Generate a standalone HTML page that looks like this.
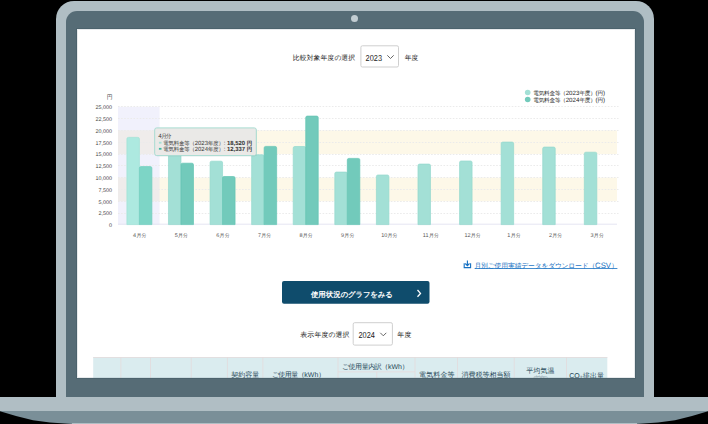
<!DOCTYPE html>
<html><head><meta charset="utf-8">
<style>
*{margin:0;padding:0;box-sizing:border-box}
html,body{width:708px;height:424px;overflow:hidden;background:#000}
body{position:relative;font-family:"Liberation Sans",sans-serif}
svg{position:absolute;display:block}
svg text{font-family:"Liberation Sans",sans-serif;text-rendering:geometricPrecision}
#outer{position:absolute;left:56px;top:1px;width:598px;height:410px;background:#b0bec4;border-radius:18px 18px 0 0}
#inner{position:absolute;left:66px;top:11px;width:578px;height:386px;background:#566c76;border-radius:11px 11px 0 0}
#cam{position:absolute;left:350.8px;top:14.6px;width:7.4px;height:7.4px;border-radius:50%;background:#c2cdd2}
#base{position:absolute;left:0;top:397px;width:708px;height:14px;background:#b0bec4}
#screen{position:absolute;left:77px;top:29px;width:558px;height:349px;background:#fff;overflow:hidden;box-shadow:0 0 0 0.8px rgba(60,85,95,.45)}
#edge{position:absolute;left:77px;top:29px;width:558px;height:349px;box-shadow:inset 0 0 0 1px rgba(120,140,150,.18);pointer-events:none}
</style></head><body>
<div id="outer"></div>
<div id="inner"></div>
<div id="cam"></div>
<div id="base"></div>
<svg style="left:0;top:0" width="708" height="424"><polygon points="0,411 708,411 708,411.3 692,415.9 675,420.2 658,422.5 636,424 72,424 50,422.5 33,420.2 16,415.9 0,411.3" fill="#7a8f98"/><rect x="72" y="423" width="565" height="1" fill="#b0bec4"/></svg>
<div id="screen"><svg style="left:0;top:0" width="558" height="349"><text y="30.81" fill="#222" font-weight="normal" ><tspan class="j" x="215.80" font-size="8.69" stroke="#222" stroke-width="0.20">比</tspan><tspan class="j" x="222.74" font-size="8.69" stroke="#222" stroke-width="0.20">較</tspan><tspan class="j" x="229.67" font-size="8.69" stroke="#222" stroke-width="0.20">対</tspan><tspan class="j" x="236.61" font-size="8.69" stroke="#222" stroke-width="0.20">象</tspan><tspan class="j" x="243.54" font-size="8.69" stroke="#222" stroke-width="0.20">年</tspan><tspan class="j" x="250.48" font-size="8.69" stroke="#222" stroke-width="0.20">度</tspan><tspan class="j" x="257.41" font-size="8.69" stroke="#222" stroke-width="0.20">の</tspan><tspan class="j" x="264.35" font-size="8.69" stroke="#222" stroke-width="0.20">選</tspan><tspan class="j" x="271.29" font-size="8.69" stroke="#222" stroke-width="0.20">択</tspan></text><rect x="283.90" y="16.80" width="37.60" height="21.20" fill="#fff" stroke="#cfcfcf" stroke-width="1" rx="1.5"/><text x="288.58" y="32.00" fill="#222" font-weight="normal" font-size="8.60" textLength="16.43" lengthAdjust="spacingAndGlyphs" >2023</text><polyline points="310.3,26.299999999999997 313.5,29.5 316.7,26.299999999999997" fill="none" stroke="#555" stroke-width="0.9"/><text y="31.11" fill="#222" font-weight="normal" ><tspan class="j" x="327.74" font-size="8.69" stroke="#222" stroke-width="0.20">年</tspan><tspan class="j" x="334.55" font-size="8.69" stroke="#222" stroke-width="0.20">度</tspan></text><rect x="41.0" y="101.40" width="499" height="23.60" fill="#fdf8e8"/><rect x="41.0" y="148.60" width="499" height="23.60" fill="#fdf8e8"/><rect x="41.0" y="77.80" width="41.58" height="117.90" fill="#c8c8f4" fill-opacity="0.25"/><line x1="41.0" x2="541.5" y1="184.50" y2="184.50" stroke="#ebebeb" stroke-width="1" stroke-dasharray="1.6 1.5"/><line x1="41.0" x2="541.5" y1="172.50" y2="172.50" stroke="#ebebeb" stroke-width="1" stroke-dasharray="1.6 1.5"/><line x1="41.0" x2="541.5" y1="160.50" y2="160.50" stroke="#ebebeb" stroke-width="1" stroke-dasharray="1.6 1.5"/><line x1="41.0" x2="541.5" y1="148.50" y2="148.50" stroke="#ebebeb" stroke-width="1" stroke-dasharray="1.6 1.5"/><line x1="41.0" x2="541.5" y1="136.50" y2="136.50" stroke="#ebebeb" stroke-width="1" stroke-dasharray="1.6 1.5"/><line x1="41.0" x2="541.5" y1="125.50" y2="125.50" stroke="#ebebeb" stroke-width="1" stroke-dasharray="1.6 1.5"/><line x1="41.0" x2="541.5" y1="113.50" y2="113.50" stroke="#ebebeb" stroke-width="1" stroke-dasharray="1.6 1.5"/><line x1="41.0" x2="541.5" y1="101.50" y2="101.50" stroke="#ebebeb" stroke-width="1" stroke-dasharray="1.6 1.5"/><line x1="41.0" x2="541.5" y1="89.50" y2="89.50" stroke="#ebebeb" stroke-width="1" stroke-dasharray="1.6 1.5"/><line x1="41.0" x2="541.5" y1="77.50" y2="77.50" stroke="#ebebeb" stroke-width="1" stroke-dasharray="1.6 1.5"/><line x1="41.0" x2="540.0" y1="195.2" y2="195.2" stroke="#e2e2f0" stroke-width="0.9"/><path d="M49.90,195.6 V109.89 Q49.90,108.39 51.40,108.39 H60.90 Q62.40,108.39 62.40,109.89 V195.6 Z" fill="#ade9e0" stroke="#9de2d6" stroke-width="0.7"/><path d="M62.40,195.6 V139.07 Q62.40,137.57 63.90,137.57 H73.40 Q74.90,137.57 74.90,139.07 V195.6 Z" fill="#7dd5c6" stroke="#70cfbf" stroke-width="0.7"/><path d="M91.48,195.6 V120.84 Q91.48,119.34 92.98,119.34 H102.48 Q103.98,119.34 103.98,120.84 V195.6 Z" fill="#a3e0d6" stroke="#93d9cd" stroke-width="0.7"/><path d="M103.98,195.6 V135.69 Q103.98,134.19 105.48,134.19 H114.98 Q116.48,134.19 116.48,135.69 V195.6 Z" fill="#72cabb" stroke="#63c4b3" stroke-width="0.7"/><path d="M133.07,195.6 V133.69 Q133.07,132.19 134.57,132.19 H144.07 Q145.57,132.19 145.57,133.69 V195.6 Z" fill="#a3e0d6" stroke="#93d9cd" stroke-width="0.7"/><path d="M145.57,195.6 V148.99 Q145.57,147.49 147.07,147.49 H156.57 Q158.07,147.49 158.07,148.99 V195.6 Z" fill="#72cabb" stroke="#63c4b3" stroke-width="0.7"/><path d="M174.65,195.6 V127.29 Q174.65,125.79 176.15,125.79 H185.65 Q187.15,125.79 187.15,127.29 V195.6 Z" fill="#a3e0d6" stroke="#93d9cd" stroke-width="0.7"/><path d="M187.15,195.6 V118.89 Q187.15,117.39 188.65,117.39 H198.15 Q199.65,117.39 199.65,118.89 V195.6 Z" fill="#72cabb" stroke="#63c4b3" stroke-width="0.7"/><path d="M216.23,195.6 V118.99 Q216.23,117.49 217.73,117.49 H227.23 Q228.73,117.49 228.73,118.99 V195.6 Z" fill="#a3e0d6" stroke="#93d9cd" stroke-width="0.7"/><path d="M228.73,195.6 V88.58 Q228.73,87.08 230.23,87.08 H239.73 Q241.23,87.08 241.23,88.58 V195.6 Z" fill="#72cabb" stroke="#63c4b3" stroke-width="0.7"/><path d="M257.82,195.6 V144.59 Q257.82,143.09 259.32,143.09 H268.82 Q270.32,143.09 270.32,144.59 V195.6 Z" fill="#a3e0d6" stroke="#93d9cd" stroke-width="0.7"/><path d="M270.32,195.6 V130.89 Q270.32,129.39 271.82,129.39 H281.32 Q282.82,129.39 282.82,130.89 V195.6 Z" fill="#72cabb" stroke="#63c4b3" stroke-width="0.7"/><path d="M299.40,195.6 V147.49 Q299.40,145.99 300.90,145.99 H310.40 Q311.90,145.99 311.90,147.49 V195.6 Z" fill="#a3e0d6" stroke="#93d9cd" stroke-width="0.7"/><path d="M340.98,195.6 V136.59 Q340.98,135.09 342.48,135.09 H351.98 Q353.48,135.09 353.48,136.59 V195.6 Z" fill="#a3e0d6" stroke="#93d9cd" stroke-width="0.7"/><path d="M382.57,195.6 V133.49 Q382.57,131.99 384.07,131.99 H393.57 Q395.07,131.99 395.07,133.49 V195.6 Z" fill="#a3e0d6" stroke="#93d9cd" stroke-width="0.7"/><path d="M424.15,195.6 V114.59 Q424.15,113.09 425.65,113.09 H435.15 Q436.65,113.09 436.65,114.59 V195.6 Z" fill="#a3e0d6" stroke="#93d9cd" stroke-width="0.7"/><path d="M465.73,195.6 V119.59 Q465.73,118.09 467.23,118.09 H476.73 Q478.23,118.09 478.23,119.59 V195.6 Z" fill="#a3e0d6" stroke="#93d9cd" stroke-width="0.7"/><path d="M507.32,195.6 V124.69 Q507.32,123.19 508.82,123.19 H518.32 Q519.82,123.19 519.82,124.69 V195.6 Z" fill="#a3e0d6" stroke="#93d9cd" stroke-width="0.7"/><text x="35.099999999999994" y="198.24" font-size="5.4" fill="#444" text-anchor="end">0</text><text x="35.099999999999994" y="186.44" font-size="5.4" fill="#444" text-anchor="end">2,500</text><text x="35.099999999999994" y="174.64" font-size="5.4" fill="#444" text-anchor="end">5,000</text><text x="35.099999999999994" y="162.84" font-size="5.4" fill="#444" text-anchor="end">7,500</text><text x="35.099999999999994" y="151.04" font-size="5.4" fill="#444" text-anchor="end">10,000</text><text x="35.099999999999994" y="139.24" font-size="5.4" fill="#444" text-anchor="end">12,500</text><text x="35.099999999999994" y="127.44" font-size="5.4" fill="#444" text-anchor="end">15,000</text><text x="35.099999999999994" y="115.64" font-size="5.4" fill="#444" text-anchor="end">17,500</text><text x="35.099999999999994" y="103.84" font-size="5.4" fill="#444" text-anchor="end">20,000</text><text x="35.099999999999994" y="92.04" font-size="5.4" fill="#444" text-anchor="end">22,500</text><text x="35.099999999999994" y="80.24" font-size="5.4" fill="#444" text-anchor="end">25,000</text><text y="70.05" fill="#444" font-weight="normal" ><tspan class="j" x="29.69" font-size="7.37" stroke="#444" stroke-width="0.17">円</tspan></text><text y="208.10" fill="#555" font-weight="normal" ><tspan x="56.12" font-size="5.50">4</tspan><tspan class="j" x="59.38" font-size="6.35" stroke="#555" stroke-width="0.14">月</tspan><tspan class="j" x="64.52" font-size="6.35" stroke="#555" stroke-width="0.14">分</tspan></text><text y="208.10" fill="#555" font-weight="normal" ><tspan x="97.71" font-size="5.50">5</tspan><tspan class="j" x="100.96" font-size="6.35" stroke="#555" stroke-width="0.14">月</tspan><tspan class="j" x="106.10" font-size="6.35" stroke="#555" stroke-width="0.14">分</tspan></text><text y="208.10" fill="#555" font-weight="normal" ><tspan x="139.29" font-size="5.50">6</tspan><tspan class="j" x="142.54" font-size="6.35" stroke="#555" stroke-width="0.14">月</tspan><tspan class="j" x="147.69" font-size="6.35" stroke="#555" stroke-width="0.14">分</tspan></text><text y="208.10" fill="#555" font-weight="normal" ><tspan x="180.88" font-size="5.50">7</tspan><tspan class="j" x="184.13" font-size="6.35" stroke="#555" stroke-width="0.14">月</tspan><tspan class="j" x="189.27" font-size="6.35" stroke="#555" stroke-width="0.14">分</tspan></text><text y="208.10" fill="#555" font-weight="normal" ><tspan x="222.46" font-size="5.50">8</tspan><tspan class="j" x="225.71" font-size="6.35" stroke="#555" stroke-width="0.14">月</tspan><tspan class="j" x="230.85" font-size="6.35" stroke="#555" stroke-width="0.14">分</tspan></text><text y="208.10" fill="#555" font-weight="normal" ><tspan x="264.04" font-size="5.50">9</tspan><tspan class="j" x="267.29" font-size="6.35" stroke="#555" stroke-width="0.14">月</tspan><tspan class="j" x="272.44" font-size="6.35" stroke="#555" stroke-width="0.14">分</tspan></text><text y="208.10" fill="#555" font-weight="normal" ><tspan x="304.25" font-size="5.50">10</tspan><tspan class="j" x="310.48" font-size="6.35" stroke="#555" stroke-width="0.14">月</tspan><tspan class="j" x="315.47" font-size="6.35" stroke="#555" stroke-width="0.14">分</tspan></text><text y="208.10" fill="#555" font-weight="normal" ><tspan x="345.83" font-size="5.50">11</tspan><tspan class="j" x="352.07" font-size="6.35" stroke="#555" stroke-width="0.14">月</tspan><tspan class="j" x="357.06" font-size="6.35" stroke="#555" stroke-width="0.14">分</tspan></text><text y="208.10" fill="#555" font-weight="normal" ><tspan x="387.42" font-size="5.50">12</tspan><tspan class="j" x="393.65" font-size="6.35" stroke="#555" stroke-width="0.14">月</tspan><tspan class="j" x="398.64" font-size="6.35" stroke="#555" stroke-width="0.14">分</tspan></text><text y="208.10" fill="#555" font-weight="normal" ><tspan x="430.37" font-size="5.50">1</tspan><tspan class="j" x="433.63" font-size="6.35" stroke="#555" stroke-width="0.14">月</tspan><tspan class="j" x="438.77" font-size="6.35" stroke="#555" stroke-width="0.14">分</tspan></text><text y="208.10" fill="#555" font-weight="normal" ><tspan x="471.96" font-size="5.50">2</tspan><tspan class="j" x="475.21" font-size="6.35" stroke="#555" stroke-width="0.14">月</tspan><tspan class="j" x="480.35" font-size="6.35" stroke="#555" stroke-width="0.14">分</tspan></text><text y="208.10" fill="#555" font-weight="normal" ><tspan x="513.54" font-size="5.50">3</tspan><tspan class="j" x="516.79" font-size="6.35" stroke="#555" stroke-width="0.14">月</tspan><tspan class="j" x="521.94" font-size="6.35" stroke="#555" stroke-width="0.14">分</tspan></text><circle cx="450.70000000000005" cy="63.5" r="2.8" fill="#a3e0d6"/><circle cx="450.70000000000005" cy="70.5" r="2.8" fill="#72cabb"/><text y="66.16" fill="#222" font-weight="normal" ><tspan class="j" x="456.30" font-size="7.11" stroke="#222" stroke-width="0.16">電</tspan><tspan class="j" x="461.69" font-size="7.11" stroke="#222" stroke-width="0.16">気</tspan><tspan class="j" x="467.09" font-size="7.11" stroke="#222" stroke-width="0.16">料</tspan><tspan class="j" x="472.49" font-size="7.11" stroke="#222" stroke-width="0.16">金</tspan><tspan class="j" x="477.88" font-size="7.11" stroke="#222" stroke-width="0.16">等</tspan><tspan class="j" x="483.28" font-size="7.11" stroke="#222" stroke-width="0.16">（</tspan><tspan x="488.64" font-size="6.16">2023</tspan><tspan class="j" x="502.38" font-size="7.11" stroke="#222" stroke-width="0.16">年</tspan><tspan class="j" x="507.77" font-size="7.11" stroke="#222" stroke-width="0.16">度</tspan><tspan class="j" x="513.17" font-size="7.11" stroke="#222" stroke-width="0.16">）</tspan><tspan x="518.54" font-size="6.16">(</tspan><tspan class="j" x="520.62" font-size="7.11" stroke="#222" stroke-width="0.16">円</tspan><tspan x="525.98" font-size="6.16">)</tspan></text><text y="73.26" fill="#222" font-weight="normal" ><tspan class="j" x="456.30" font-size="7.11" stroke="#222" stroke-width="0.16">電</tspan><tspan class="j" x="461.69" font-size="7.11" stroke="#222" stroke-width="0.16">気</tspan><tspan class="j" x="467.09" font-size="7.11" stroke="#222" stroke-width="0.16">料</tspan><tspan class="j" x="472.49" font-size="7.11" stroke="#222" stroke-width="0.16">金</tspan><tspan class="j" x="477.88" font-size="7.11" stroke="#222" stroke-width="0.16">等</tspan><tspan class="j" x="483.28" font-size="7.11" stroke="#222" stroke-width="0.16">（</tspan><tspan x="488.64" font-size="6.16">2024</tspan><tspan class="j" x="502.38" font-size="7.11" stroke="#222" stroke-width="0.16">年</tspan><tspan class="j" x="507.77" font-size="7.11" stroke="#222" stroke-width="0.16">度</tspan><tspan class="j" x="513.17" font-size="7.11" stroke="#222" stroke-width="0.16">）</tspan><tspan x="518.54" font-size="6.16">(</tspan><tspan class="j" x="520.62" font-size="7.11" stroke="#222" stroke-width="0.16">円</tspan><tspan x="525.98" font-size="6.16">)</tspan></text><rect x="78.20" y="99.60" width="101.60" height="27.70" fill="#000" fill-opacity="0.12" rx="2.5"/><rect x="77.70" y="98.90" width="101.60" height="27.70" fill="#eae9e7" stroke="#a8dcd2" stroke-width="1" rx="2"/><text y="108.76" fill="#333" font-weight="normal" ><tspan x="81.16" font-size="6.16">4</tspan><tspan class="j" x="84.23" font-size="7.11" stroke="#333" stroke-width="0.16">月</tspan><tspan class="j" x="88.86" font-size="7.11" stroke="#333" stroke-width="0.16">分</tspan></text><rect x="81.90" y="112.80" width="2.60" height="1.80" fill="#a3e0d6" /><rect x="81.90" y="118.90" width="2.60" height="1.80" fill="#3fb8a2" /><text y="115.98" fill="#333" font-weight="normal" ><tspan class="j" x="86.32" font-size="6.86" stroke="#333" stroke-width="0.15">電</tspan><tspan class="j" x="91.57" font-size="6.86" stroke="#333" stroke-width="0.15">気</tspan><tspan class="j" x="96.81" font-size="6.86" stroke="#333" stroke-width="0.15">料</tspan><tspan class="j" x="102.05" font-size="6.86" stroke="#333" stroke-width="0.15">金</tspan><tspan class="j" x="107.29" font-size="6.86" stroke="#333" stroke-width="0.15">等</tspan><tspan class="j" x="112.53" font-size="6.86" stroke="#333" stroke-width="0.15">（</tspan><tspan x="117.72" font-size="5.94">2023</tspan><tspan class="j" x="130.99" font-size="6.86" stroke="#333" stroke-width="0.15">年</tspan><tspan class="j" x="136.23" font-size="6.86" stroke="#333" stroke-width="0.15">度</tspan><tspan class="j" x="141.47" font-size="6.86" stroke="#333" stroke-width="0.15">）</tspan><tspan x="146.66" font-size="5.94">: </tspan><tspan x="149.96" font-size="5.94" font-weight="bold">18,520 </tspan><tspan class="j" x="169.83" font-size="6.86" stroke="#333" stroke-width="0.15" font-weight="bold">円</tspan></text><text y="122.28" fill="#333" font-weight="normal" ><tspan class="j" x="86.32" font-size="6.86" stroke="#333" stroke-width="0.15">電</tspan><tspan class="j" x="91.57" font-size="6.86" stroke="#333" stroke-width="0.15">気</tspan><tspan class="j" x="96.81" font-size="6.86" stroke="#333" stroke-width="0.15">料</tspan><tspan class="j" x="102.05" font-size="6.86" stroke="#333" stroke-width="0.15">金</tspan><tspan class="j" x="107.29" font-size="6.86" stroke="#333" stroke-width="0.15">等</tspan><tspan class="j" x="112.53" font-size="6.86" stroke="#333" stroke-width="0.15">（</tspan><tspan x="117.72" font-size="5.94">2024</tspan><tspan class="j" x="130.99" font-size="6.86" stroke="#333" stroke-width="0.15">年</tspan><tspan class="j" x="136.23" font-size="6.86" stroke="#333" stroke-width="0.15">度</tspan><tspan class="j" x="141.47" font-size="6.86" stroke="#333" stroke-width="0.15">）</tspan><tspan x="146.66" font-size="5.94">: </tspan><tspan x="149.96" font-size="5.94" font-weight="bold">12,337 </tspan><tspan class="j" x="169.83" font-size="6.86" stroke="#333" stroke-width="0.15" font-weight="bold">円</tspan></text><path d="M390.4,231.60000000000002 V236.60000000000002 M388.3,234.5 L390.4,236.60000000000002 L392.5,234.5 M387.2,234.3 V238.60000000000002 H393.6 V234.3" fill="none" stroke="#1570c2" stroke-width="1.1"/><text y="238.99" fill="#1570c2" font-weight="normal" ><tspan class="j" x="397.41" font-size="8.64" stroke="#1570c2" stroke-width="0.19">月</tspan><tspan class="j" x="404.11" font-size="8.64" stroke="#1570c2" stroke-width="0.19">別</tspan><tspan class="j" x="410.82" font-size="8.64" stroke="#1570c2" stroke-width="0.19">ご</tspan><tspan class="j" x="417.53" font-size="8.64" stroke="#1570c2" stroke-width="0.19">使</tspan><tspan class="j" x="424.24" font-size="8.64" stroke="#1570c2" stroke-width="0.19">用</tspan><tspan class="j" x="430.94" font-size="8.64" stroke="#1570c2" stroke-width="0.19">実</tspan><tspan class="j" x="437.65" font-size="8.64" stroke="#1570c2" stroke-width="0.19">績</tspan><tspan class="j" x="444.36" font-size="8.64" stroke="#1570c2" stroke-width="0.19">デ</tspan><tspan class="j" x="451.06" font-size="8.64" stroke="#1570c2" stroke-width="0.19">ー</tspan><tspan class="j" x="457.77" font-size="8.64" stroke="#1570c2" stroke-width="0.19">タ</tspan><tspan class="j" x="464.48" font-size="8.64" stroke="#1570c2" stroke-width="0.19">を</tspan><tspan class="j" x="471.19" font-size="8.64" stroke="#1570c2" stroke-width="0.19">ダ</tspan><tspan class="j" x="477.89" font-size="8.64" stroke="#1570c2" stroke-width="0.19">ウ</tspan><tspan class="j" x="484.60" font-size="8.64" stroke="#1570c2" stroke-width="0.19">ン</tspan><tspan class="j" x="491.31" font-size="8.64" stroke="#1570c2" stroke-width="0.19">ロ</tspan><tspan class="j" x="498.02" font-size="8.64" stroke="#1570c2" stroke-width="0.19">ー</tspan><tspan class="j" x="504.72" font-size="8.64" stroke="#1570c2" stroke-width="0.19">ド</tspan><tspan class="j" x="511.43" font-size="8.64" stroke="#1570c2" stroke-width="0.19">（</tspan><tspan x="518.02" font-size="7.82">CSV</tspan><tspan class="j" x="534.22" font-size="8.64" stroke="#1570c2" stroke-width="0.19">）</tspan></text><line x1="397.7" x2="540.4" y1="239.5" y2="239.5" stroke="#1570c2" stroke-width="0.8"/><rect x="205.00" y="252.00" width="147.50" height="22.80" fill="#0f4c6c" rx="2"/><text y="267.66" fill="#fff" font-weight="bold" ><tspan class="j" x="233.94" font-size="9.40" stroke="#fff" stroke-width="0.21">使</tspan><tspan class="j" x="241.37" font-size="9.40" stroke="#fff" stroke-width="0.21">用</tspan><tspan class="j" x="248.80" font-size="9.40" stroke="#fff" stroke-width="0.21">状</tspan><tspan class="j" x="256.22" font-size="9.40" stroke="#fff" stroke-width="0.21">況</tspan><tspan class="j" x="263.65" font-size="9.40" stroke="#fff" stroke-width="0.21">の</tspan><tspan class="j" x="271.08" font-size="9.40" stroke="#fff" stroke-width="0.21">グ</tspan><tspan class="j" x="278.50" font-size="9.40" stroke="#fff" stroke-width="0.21">ラ</tspan><tspan class="j" x="285.93" font-size="9.40" stroke="#fff" stroke-width="0.21">フ</tspan><tspan class="j" x="293.35" font-size="9.40" stroke="#fff" stroke-width="0.21">を</tspan><tspan class="j" x="300.78" font-size="9.40" stroke="#fff" stroke-width="0.21">み</tspan><tspan class="j" x="308.21" font-size="9.40" stroke="#fff" stroke-width="0.21">る</tspan></text><polyline points="340.5,261 343.5,264.4 340.5,267.8" fill="none" stroke="#fff" stroke-width="1.3"/><text y="308.04" fill="#222" font-weight="normal" ><tspan class="j" x="223.32" font-size="8.76" stroke="#222" stroke-width="0.20">表</tspan><tspan class="j" x="230.35" font-size="8.76" stroke="#222" stroke-width="0.20">示</tspan><tspan class="j" x="237.38" font-size="8.76" stroke="#222" stroke-width="0.20">年</tspan><tspan class="j" x="244.41" font-size="8.76" stroke="#222" stroke-width="0.20">度</tspan><tspan class="j" x="251.45" font-size="8.76" stroke="#222" stroke-width="0.20">の</tspan><tspan class="j" x="258.48" font-size="8.76" stroke="#222" stroke-width="0.20">選</tspan><tspan class="j" x="265.51" font-size="8.76" stroke="#222" stroke-width="0.20">択</tspan></text><rect x="276.20" y="293.70" width="39.20" height="22.40" fill="#fff" stroke="#cfcfcf" stroke-width="1" rx="1.5"/><text x="281.48" y="309.30" fill="#222" font-weight="normal" font-size="8.60" textLength="16.33" lengthAdjust="spacingAndGlyphs" >2024</text><polyline points="303.3,303.8 306.3,306.8 309.3,303.8" fill="none" stroke="#555" stroke-width="0.9"/><text y="308.04" fill="#222" font-weight="normal" ><tspan class="j" x="320.21" font-size="8.76" stroke="#222" stroke-width="0.20">年</tspan><tspan class="j" x="327.62" font-size="8.76" stroke="#222" stroke-width="0.20">度</tspan></text><rect x="16.20" y="328.00" width="514.10" height="30.00" fill="#daecef" /><rect x="16.20" y="328.00" width="514.10" height="0.80" fill="#e4dcdc" /><rect x="43.50" y="328.00" width="0.80" height="30.00" fill="#e3dbdc" /><rect x="73.10" y="328.00" width="0.80" height="30.00" fill="#e3dbdc" /><rect x="113.80" y="328.00" width="0.80" height="30.00" fill="#e3dbdc" /><rect x="149.90" y="328.00" width="0.80" height="30.00" fill="#e3dbdc" /><rect x="185.50" y="328.00" width="0.80" height="30.00" fill="#e3dbdc" /><rect x="260.60" y="328.00" width="0.80" height="30.00" fill="#e3dbdc" /><rect x="337.60" y="328.00" width="0.80" height="30.00" fill="#e3dbdc" /><rect x="380.10" y="328.00" width="0.80" height="30.00" fill="#e3dbdc" /><rect x="436.80" y="328.00" width="0.80" height="30.00" fill="#e3dbdc" /><rect x="489.20" y="328.00" width="0.80" height="30.00" fill="#e3dbdc" /><rect x="261.00" y="342.50" width="77.00" height="0.80" fill="#e6d9db" /><rect x="299.40" y="342.90" width="0.80" height="20.00" fill="#e6d9db" /><text y="355.08" fill="#1f4757" font-weight="normal" ><tspan class="j" x="23.58" font-size="8.89" stroke="#1f4757" stroke-width="0.20">年</tspan><tspan class="j" x="28.45" font-size="8.89" stroke="#1f4757" stroke-width="0.20">月</tspan></text><text y="355.08" fill="#1f4757" font-weight="normal" ><tspan class="j" x="50.12" font-size="8.89" stroke="#1f4757" stroke-width="0.20">検</tspan><tspan class="j" x="56.67" font-size="8.89" stroke="#1f4757" stroke-width="0.20">針</tspan><tspan class="j" x="63.21" font-size="8.89" stroke="#1f4757" stroke-width="0.20">日</tspan></text><text y="355.08" fill="#1f4757" font-weight="normal" ><tspan class="j" x="81.89" font-size="8.89" stroke="#1f4757" stroke-width="0.20">使</tspan><tspan class="j" x="88.77" font-size="8.89" stroke="#1f4757" stroke-width="0.20">用</tspan><tspan class="j" x="95.66" font-size="8.89" stroke="#1f4757" stroke-width="0.20">期</tspan><tspan class="j" x="102.54" font-size="8.89" stroke="#1f4757" stroke-width="0.20">間</tspan></text><text y="355.08" fill="#1f4757" font-weight="normal" ><tspan class="j" x="119.60" font-size="8.89" stroke="#1f4757" stroke-width="0.20">使</tspan><tspan class="j" x="126.71" font-size="8.89" stroke="#1f4757" stroke-width="0.20">用</tspan><tspan class="j" x="133.82" font-size="8.89" stroke="#1f4757" stroke-width="0.20">日</tspan><tspan class="j" x="140.93" font-size="8.89" stroke="#1f4757" stroke-width="0.20">数</tspan></text><text y="348.08" fill="#1f4757" font-weight="normal" ><tspan class="j" x="154.24" font-size="8.89" stroke="#1f4757" stroke-width="0.20">契</tspan><tspan class="j" x="161.22" font-size="8.89" stroke="#1f4757" stroke-width="0.20">約</tspan><tspan class="j" x="168.21" font-size="8.89" stroke="#1f4757" stroke-width="0.20">容</tspan><tspan class="j" x="175.19" font-size="8.89" stroke="#1f4757" stroke-width="0.20">量</tspan></text><text y="348.18" fill="#1f4757" font-weight="normal" ><tspan class="j" x="194.88" font-size="8.89" stroke="#1f4757" stroke-width="0.20">ご</tspan><tspan class="j" x="201.36" font-size="8.89" stroke="#1f4757" stroke-width="0.20">使</tspan><tspan class="j" x="207.83" font-size="8.89" stroke="#1f4757" stroke-width="0.20">用</tspan><tspan class="j" x="214.30" font-size="8.89" stroke="#1f4757" stroke-width="0.20">量</tspan><tspan class="j" x="220.78" font-size="8.89" stroke="#1f4757" stroke-width="0.20">（</tspan><tspan x="227.35" font-size="7.00">kWh</tspan><tspan class="j" x="241.25" font-size="8.89" stroke="#1f4757" stroke-width="0.20">）</tspan></text><text y="339.68" fill="#1f4757" font-weight="normal" ><tspan class="j" x="265.02" font-size="8.89" stroke="#1f4757" stroke-width="0.20">ご</tspan><tspan class="j" x="271.56" font-size="8.89" stroke="#1f4757" stroke-width="0.20">使</tspan><tspan class="j" x="278.10" font-size="8.89" stroke="#1f4757" stroke-width="0.20">用</tspan><tspan class="j" x="284.65" font-size="8.89" stroke="#1f4757" stroke-width="0.20">量</tspan><tspan class="j" x="291.19" font-size="8.89" stroke="#1f4757" stroke-width="0.20">内</tspan><tspan class="j" x="297.73" font-size="8.89" stroke="#1f4757" stroke-width="0.20">訳</tspan><tspan class="j" x="304.27" font-size="8.89" stroke="#1f4757" stroke-width="0.20">（</tspan><tspan x="310.88" font-size="7.00">kWh</tspan><tspan class="j" x="324.82" font-size="8.89" stroke="#1f4757" stroke-width="0.20">）</tspan></text><text y="348.48" fill="#1f4757" font-weight="normal" ><tspan class="j" x="342.10" font-size="8.89" stroke="#1f4757" stroke-width="0.20">電</tspan><tspan class="j" x="349.21" font-size="8.89" stroke="#1f4757" stroke-width="0.20">気</tspan><tspan class="j" x="356.32" font-size="8.89" stroke="#1f4757" stroke-width="0.20">料</tspan><tspan class="j" x="363.42" font-size="8.89" stroke="#1f4757" stroke-width="0.20">金</tspan><tspan class="j" x="370.53" font-size="8.89" stroke="#1f4757" stroke-width="0.20">等</tspan></text><text y="348.48" fill="#1f4757" font-weight="normal" ><tspan class="j" x="384.46" font-size="8.89" stroke="#1f4757" stroke-width="0.20">消</tspan><tspan class="j" x="391.48" font-size="8.89" stroke="#1f4757" stroke-width="0.20">費</tspan><tspan class="j" x="398.50" font-size="8.89" stroke="#1f4757" stroke-width="0.20">税</tspan><tspan class="j" x="405.52" font-size="8.89" stroke="#1f4757" stroke-width="0.20">等</tspan><tspan class="j" x="412.54" font-size="8.89" stroke="#1f4757" stroke-width="0.20">相</tspan><tspan class="j" x="419.56" font-size="8.89" stroke="#1f4757" stroke-width="0.20">当</tspan><tspan class="j" x="426.58" font-size="8.89" stroke="#1f4757" stroke-width="0.20">額</tspan></text><text y="343.88" fill="#1f4757" font-weight="normal" ><tspan class="j" x="449.29" font-size="8.89" stroke="#1f4757" stroke-width="0.20">平</tspan><tspan class="j" x="456.37" font-size="8.89" stroke="#1f4757" stroke-width="0.20">均</tspan><tspan class="j" x="463.46" font-size="8.89" stroke="#1f4757" stroke-width="0.20">気</tspan><tspan class="j" x="470.54" font-size="8.89" stroke="#1f4757" stroke-width="0.20">温</tspan></text><text y="351.88" fill="#9ab0b8" font-weight="normal" ><tspan class="j" x="451.98" font-size="8.89" stroke="#9ab0b8" stroke-width="0.20">（</tspan><tspan class="j" x="457.44" font-size="8.89" stroke="#9ab0b8" stroke-width="0.20">前</tspan><tspan class="j" x="462.90" font-size="8.89" stroke="#9ab0b8" stroke-width="0.20">年</tspan><tspan class="j" x="468.36" font-size="8.89" stroke="#9ab0b8" stroke-width="0.20">）</tspan></text><text y="349.08" fill="#1f4757" font-weight="normal" ><tspan x="492.28" font-size="7.00">CO₂</tspan><tspan class="j" x="505.75" font-size="8.89" stroke="#1f4757" stroke-width="0.20">排</tspan><tspan class="j" x="512.92" font-size="8.89" stroke="#1f4757" stroke-width="0.20">出</tspan><tspan class="j" x="520.10" font-size="8.89" stroke="#1f4757" stroke-width="0.20">量</tspan></text></svg></div>
<div id="edge"></div>
<script>
(function(){try{
var c=document.createElement('canvas').getContext('2d');
c.font='100px "Liberation Sans"';
var w=c.measureText('比').width;
if(Math.abs(w-75)>4){
var ts=document.querySelectorAll('tspan.j');
for(var i=0;i<ts.length;i++){var t=ts[i];var f=parseFloat(t.getAttribute('font-size'));t.setAttribute('font-size',(f/1.27).toFixed(2));t.setAttribute('stroke-width','0');}
}}catch(e){}})();
</script>
</body></html>
